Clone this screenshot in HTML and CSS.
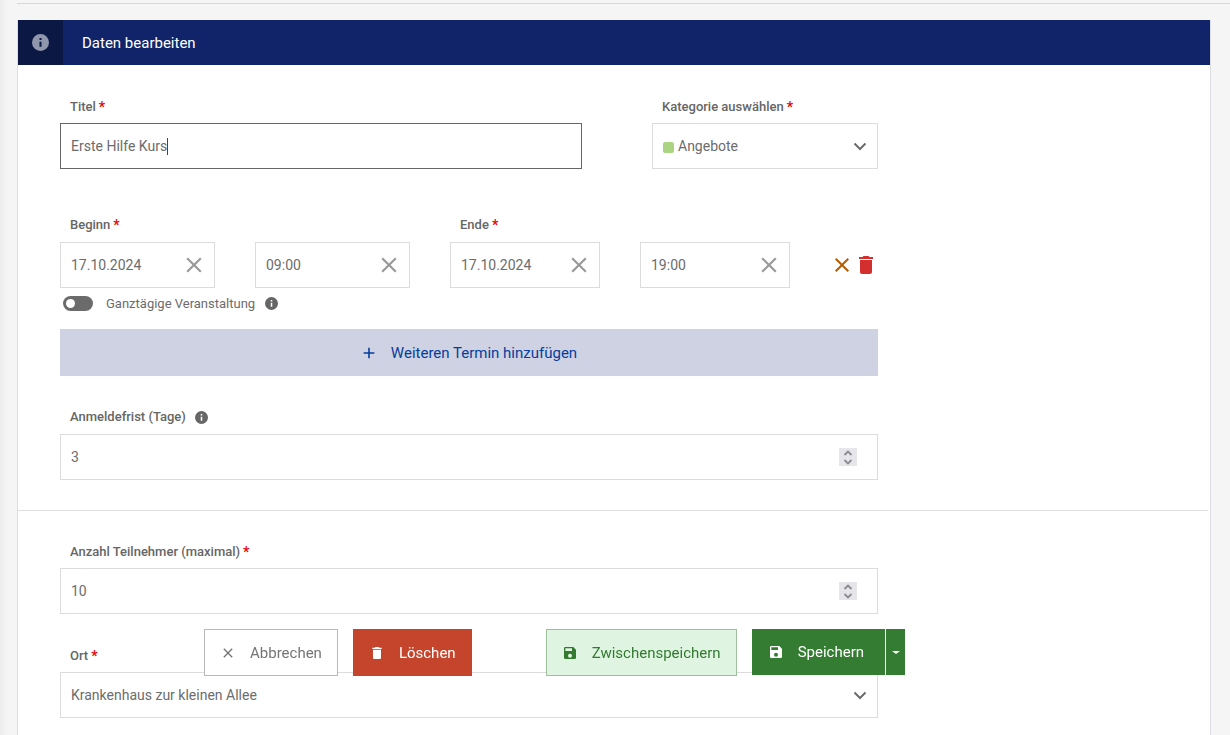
FILE: index.html
```html
<!DOCTYPE html>
<html lang="de">
<head>
<meta charset="utf-8">
<title>Daten bearbeiten</title>
<link rel="stylesheet" href="styles.css">
</head>
<body>
<svg class="sprite" aria-hidden="true">
  <symbol id="info" viewBox="2 2 20 20"><path fill="currentColor" d="M12 2a10 10 0 1 0 0 20 10 10 0 0 0 0-20zm1.200 15h-2.400v-6h2.400zm0-8h-2.400V6.600h2.400z"/></symbol>
  <symbol id="close" viewBox="0 0 24 24"><path fill="currentColor" d="M19 6.410 17.590 5 12 10.590 6.410 5 5 6.410 10.590 12 5 17.590 6.410 19 12 13.410 17.590 19 19 17.590 13.410 12z"/></symbol>
  <symbol id="trash" viewBox="0 0 24 24"><path fill="currentColor" d="M6 19c0 1.100.9 2 2 2h8c1.100 0 2-.9 2-2V7H6zM19 4h-3.500l-1-1h-5l-1 1H5v2h14z"/></symbol>
  <symbol id="save" viewBox="0 0 24 24"><path fill="currentColor" d="M17 3H5a2 2 0 0 0-2 2v14a2 2 0 0 0 2 2h14a2 2 0 0 0 2-2V7zm-5 16a3 3 0 1 1 0-6 3 3 0 0 1 0 6zm3-10H5V5h10z"/></symbol>
  <symbol id="plus" viewBox="0 0 24 24"><path fill="currentColor" d="M20 13.200h-6.800V20h-2.400v-6.800H4v-2.400h6.800V4h2.400v6.800H20z"/></symbol>
  <symbol id="chevron" viewBox="0 0 14 14"><path fill="none" stroke="currentColor" stroke-width="2" d="M1.500 4.500 7 10l5.500-5.500"/></symbol>
  <symbol id="up" viewBox="0 0 10 6"><path fill="none" stroke="currentColor" stroke-width="1.800" d="M1.500 5 5 1.500 8.500 5"/></symbol>
  <symbol id="down" viewBox="0 0 10 6"><path fill="none" stroke="currentColor" stroke-width="1.800" d="M1.500 1 5 4.500 8.500 1"/></symbol>
</svg>
<main class="page">
  <section class="card">
    <header class="card-header">
      <span class="header-icon"><svg><use href="#info"/></svg></span>
      <h1 class="header-title">Daten bearbeiten</h1>
    </header>
    <form class="form">
      <div class="section">
        <div class="row row-title">
          <div class="field snug">
            <label class="label" for="titel">Titel <b class="req">*</b></label>
            <div class="control focused">
              <input class="auto-input" id="titel" type="text" value="Erste Hilfe Kurs"><span class="caret"></span>
            </div>
          </div>
          <div class="field snug">
            <label class="label" for="kategorie">Kategorie auswählen <b class="req">*</b></label>
            <div class="control">
              <span class="swatch"></span>
              <select class="input with-swatch" id="kategorie"><option>Angebote</option></select>
              <svg class="chevron"><use href="#chevron"/></svg>
            </div>
          </div>
        </div>
        <div class="row row-dates">
          <div class="field">
            <label class="label" for="beginn">Beginn <b class="req">*</b></label>
            <div class="control"><input class="input" id="beginn" type="text" value="17.10.2024"><button class="clear" type="button" aria-label="Leeren"><svg><use href="#close"/></svg></button></div>
          </div>
          <div class="field">
            <div class="control"><input class="input" type="text" aria-label="Beginn Uhrzeit" value="09:00"><button class="clear" type="button" aria-label="Leeren"><svg><use href="#close"/></svg></button></div>
          </div>
          <div class="field">
            <label class="label" for="ende">Ende <b class="req">*</b></label>
            <div class="control"><input class="input" id="ende" type="text" value="17.10.2024"><button class="clear" type="button" aria-label="Leeren"><svg><use href="#close"/></svg></button></div>
          </div>
          <div class="field">
            <div class="control"><input class="input" type="text" aria-label="Ende Uhrzeit" value="19:00"><button class="clear" type="button" aria-label="Leeren"><svg><use href="#close"/></svg></button></div>
          </div>
          <div class="row-tools">
            <button class="tool cancel" type="button" aria-label="Absagen"><svg><use href="#close"/></svg></button>
            <button class="tool remove" type="button" aria-label="Termin entfernen"><svg><use href="#trash"/></svg></button>
          </div>
        </div>
        <div class="toggle-row">
          <input class="toggle" id="ganztag" type="checkbox" role="switch">
          <label class="toggle-label" for="ganztag">Ganztägige Veranstaltung</label>
          <svg class="info"><use href="#info"/></svg>
        </div>
        <button class="add" type="button"><svg><use href="#plus"/></svg>Weiteren Termin hinzufügen</button>
        <div class="field">
          <label class="label" for="frist">Anmeldefrist (Tage) <svg class="info"><use href="#info"/></svg></label>
          <div class="control">
            <input class="input" id="frist" type="number" value="3">
            <span class="stepper"><button type="button" aria-label="Mehr"><svg><use href="#up"/></svg></button><button type="button" aria-label="Weniger"><svg><use href="#down"/></svg></button></span>
          </div>
        </div>
      </div>
      <hr class="divider">
      <div class="section section-lower">
        <div class="field snug">
          <label class="label" for="anzahl">Anzahl Teilnehmer (maximal) <b class="req">*</b></label>
          <div class="control">
            <input class="input" id="anzahl" type="number" value="10">
            <span class="stepper"><button type="button" aria-label="Mehr"><svg><use href="#up"/></svg></button><button type="button" aria-label="Weniger"><svg><use href="#down"/></svg></button></span>
          </div>
        </div>
        <div class="field snug">
          <label class="label" for="ort">Ort <b class="req">*</b></label>
          <div class="control">
            <select class="input" id="ort"><option>Krankenhaus zur kleinen Allee</option></select>
            <svg class="chevron"><use href="#chevron"/></svg>
          </div>
        </div>
      </div>
    </form>
  </section>
</main>
<div class="actions">
  <button class="btn btn-plain" type="button"><svg><use href="#close"/></svg>Abbrechen</button>
  <button class="btn btn-danger" type="button"><svg><use href="#trash"/></svg>Löschen</button>
  <button class="btn btn-soft" type="button"><svg><use href="#save"/></svg>Zwischenspeichern</button>
  <div class="split">
    <button class="btn btn-primary" type="button"><svg><use href="#save"/></svg>Speichern</button>
    <button class="btn-more" type="button" aria-label="Weitere Optionen"><span class="triangle"></span></button>
  </div>
</div>
</body>
</html>
```
FILE: styles.css
```css
* { box-sizing: border-box; }
body {
  margin: 0;
  background: linear-gradient(to right, #ececec, #f5f5f5 8px);
  font-family: Roboto, "Liberation Sans", sans-serif;
  font-size: 14px;
  color: #6c6c6c;
}
button, input, select { font: inherit; color: inherit; }
button { border: 0; padding: 0; background: none; cursor: pointer; }
svg { display: block; flex: none; }
.sprite { position: absolute; width: 0; height: 0; }

.page { padding: 3px 0 0 17px; }
.page::before { content: ""; display: block; height: 1px; margin-bottom: 16px; background: #d8d8d8; }
.card {
  margin-right: 19px;
  background: #fff;
  border: solid #dcdee2;
  border-width: 0 1px;
}
.card-header { display: flex; height: 45px; background: #112469; color: #fff; }
.header-icon { display: grid; place-items: center; width: 45px; background: #0a1843; color: #9096ac; }
.header-icon svg { width: 17px; height: 17px; }
.header-title { margin: 0 19px; font-size: 15px; font-weight: 400; line-height: 46px; }

.section { display: flex; flex-direction: column; max-width: 902px; padding: 33px 42px 30px; }
.section-lower { gap: 33px; padding: 32px 42px 17px; }
.divider { height: 1px; margin: 0 2px 0 0; border: 0; background: #dedfe2; }
.row { display: grid; align-items: end; }
.row-title { grid-template-columns: 522fr 226fr; column-gap: 70px; margin-bottom: 47px; }
.row-dates { grid-template-columns: 155fr 155fr 150fr 150fr 48px; column-gap: 40px; margin-bottom: 6px; }
.field { display: flex; flex-direction: column; gap: 8px; min-width: 0; }
.snug { gap: 7px; }
.label {
  display: flex;
  align-items: center;
  gap: 3px;
  height: 18px;
  padding-left: 10px;
  font-size: 13px;
  font-weight: 500;
  line-height: 18px;
  color: #666;
}
.req { color: #e00a0a; font-size: 14px; font-weight: 700; }
.info { width: 13px; height: 13px; color: #666; }
.label .info { margin-left: 6px; }

.control { position: relative; display: flex; align-items: center; height: 46px; border: 1px solid #dcdcdc; background: #fff; }
.focused { border-color: #666; }
.input {
  flex: 1;
  min-width: 0;
  width: 100%;
  height: 44px;
  padding: 0 10px;
  border: 0;
  outline: 0;
  background: transparent;
  appearance: none;
}
.input[type="number"] { appearance: textfield; }
.input::-webkit-inner-spin-button { appearance: none; }
.with-swatch { padding-left: 25px; }
.auto-input { field-sizing: content; padding: 0 0 0 10px; border: 0; outline: 0; background: transparent; height: 44px; }
.caret { width: 1px; height: 17px; background: #444; }
.swatch { position: absolute; left: 10px; top: 18px; width: 11px; height: 11px; border-radius: 2px; background: #abd482; }
.chevron { position: absolute; right: 10px; top: 15px; width: 14px; height: 14px; pointer-events: none; }
.clear { flex: none; padding-right: 7px; color: #999; }
.clear svg { width: 26px; height: 26px; }
.row-tools { display: flex; align-items: center; height: 46px; }
.tool svg { width: 24px; height: 24px; }
.cancel { color: #b85c00; }
.remove { color: #d32f2f; }
.stepper { position: absolute; right: 20px; top: 13px; display: grid; width: 18px; height: 18px; background: #e6e6ea; color: #8a8a90; }
.stepper button { display: grid; place-items: center; }
.stepper svg { width: 10px; height: 6px; }

.toggle-row { display: flex; align-items: center; height: 18px; margin-bottom: 17px; padding-left: 3px; font-size: 13px; }
.toggle { appearance: none; width: 30px; height: 15px; margin: 0 13px 0 0; padding: 3px; border-radius: 8px; background: #6b6b6b; }
.toggle::before { content: ""; display: block; width: 9px; height: 9px; border-radius: 50%; background: #fff; }
.toggle-label { margin-right: 10px; }
.add {
  display: flex;
  align-items: center;
  justify-content: center;
  gap: 14px;
  height: 47px;
  margin-bottom: 32px;
  background: #cfd2e2;
  color: #063d9b;
  font-size: 15px;
}
.add svg { width: 16px; height: 16px; }

.actions { position: fixed; left: 204px; bottom: 59px; display: flex; gap: 15px; font-size: 15px; }
.btn { display: flex; align-items: center; gap: 14px; height: 47px; padding: 0 15px; border: 1px solid transparent; }
.btn svg { width: 16px; height: 16px; }
.btn-plain { border-color: #b8b8b8; background: #fff; color: #757575; }
.btn-danger { margin-right: 59px; background: #c5452c; border-color: #c5452c; color: #fff; }
.btn-soft { border-color: #9cc09c; background: #dff5e1; color: #337a30; }
.split { display: flex; gap: 1px; height: 46px; }
.btn-primary { height: 46px; padding: 0 20px 0 15px; background: #347c31; border-color: #347c31; color: #fff; }
.btn-more { display: grid; place-items: center; width: 19px; background: #347c31; }
.triangle { border: solid transparent; border-width: 3px 4px 0; border-top-color: #fff; }
```
